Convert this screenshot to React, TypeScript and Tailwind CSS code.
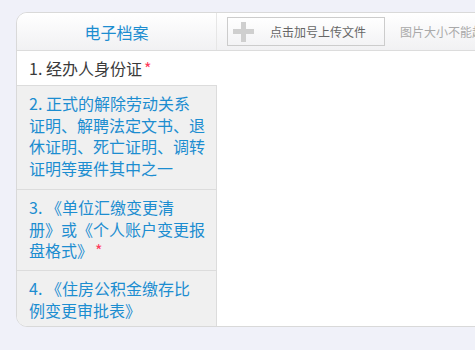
import React from 'react';

const font = { fontFamily: '"Noto Sans CJK SC", "Noto Sans", sans-serif' };

const Star = () => <span className="text-[#ff3b5c] ml-[2px]">*</span>;

const App = () => {
  const items = [
    {
      lines: ['2. 正式的解除劳动关系', '证明、解聘法定文书、退', '休证明、死亡证明、调转', '证明等要件其中之一'],
      h: 'h-[104px]',
      star: false,
    },
    { lines: ['3. 《单位汇缴变更清', '册》或《个人账户变更报', '盘格式》'], h: 'h-[81px]', star: true },
    { lines: ['4. 《住房公积金缴存比', '例变更审批表》'], h: 'h-[56px]', star: false },
  ];

  return (
    <div className="w-[475px] h-[350px] overflow-hidden bg-[#f0f1f9] pt-[12px] pl-[16px]" style={font}>
      <div className="w-[600px] border border-[#d9d9d9] rounded-l-[11px] bg-white overflow-hidden">
        {/* header */}
        <div className="flex h-[38px] border-b border-[#dcdcdc] bg-gradient-to-b from-white to-[#f1f1f3]">
          <div className="w-[200px] border-r border-[#e6e6e6] flex items-center justify-center text-[16px] text-[#1c8dd0]">
            电子档案
          </div>
          <div className="flex items-center pl-[10px]">
            <button className="w-[158px] h-[29px] border border-[#cccccc] bg-gradient-to-b from-white to-[#f3f3f5] flex items-center">
              <span className="relative w-[21px] h-[20px] ml-[5px]">
                <span className="absolute left-[8px] top-0 w-[5px] h-[20px] bg-[#cfcfcf]" />
                <span className="absolute left-0 top-[7px] w-[21px] h-[5px] bg-[#cfcfcf]" />
              </span>
              <span className="ml-[16px] text-[12px] text-[#666666] leading-none">点击加号上传文件</span>
            </button>
            <span className="ml-[15px] text-[12px] text-[#a9a9a9] whitespace-nowrap">图片大小不能超过5M</span>
          </div>
        </div>

        {/* first row */}
        <div className="h-[34px] flex items-center pl-[12px] text-[16px] text-[#3a3a3a]">
          1. 经办人身份证<Star />
        </div>

        {/* remaining rows */}
        <div className="flex">
          <div className="w-[200px] bg-[#f0f0f0] border-r border-[#dcdcdc]">
            {items.map((item, i) => (
              <div
                key={i}
                className={`${item.h} border-t border-[#dcdcdc] pl-[12px] pt-[7px] text-[16px] leading-[21.5px] text-[#1c8dd0] whitespace-nowrap`}
              >
                {item.lines.map((line, j) => (
                  <div key={j}>
                    {line}
                    {item.star && j === item.lines.length - 1 && <Star />}
                  </div>
                ))}
              </div>
            ))}
          </div>
          <div className="flex-1 bg-white" />
        </div>
      </div>
    </div>
  );
};

export default App;
